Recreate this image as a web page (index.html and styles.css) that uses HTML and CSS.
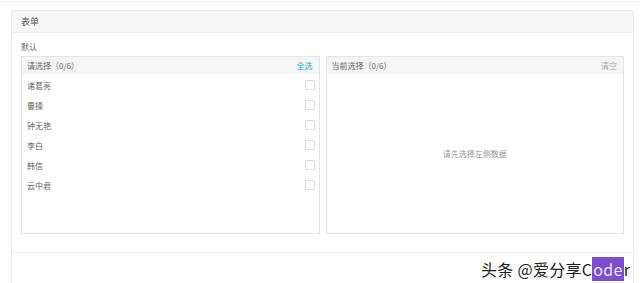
FILE: index.html
```html
<!DOCTYPE html>
<html lang="zh">
<head>
<meta charset="utf-8">
<link rel="stylesheet" href="styles.css">
</head>
<body>
<div class="page">
  <div class="card">
    <div class="card-head">表单</div>
    <div class="card-body">
      <div class="label">默认</div>
      <div class="transfer">
        <div class="panel">
          <div class="panel-head"><span>请选择（0/6）</span><span class="link">全选</span></div>
          <ul class="list">
            <li><span>诸葛亮</span><i class="cb"></i></li>
            <li><span>曹操</span><i class="cb"></i></li>
            <li><span>钟无艳</span><i class="cb"></i></li>
            <li><span>李白</span><i class="cb"></i></li>
            <li><span>韩信</span><i class="cb"></i></li>
            <li><span>云中君</span><i class="cb"></i></li>
          </ul>
        </div>
        <div class="panel">
          <div class="panel-head"><span>当前选择（0/6）</span><span class="muted">清空</span></div>
          <div class="empty">请先选择左侧数据</div>
        </div>
      </div>
    </div>
    <div class="card-foot"></div>
  </div>
  <div class="mark">头条 @爱分享C<span class="hl">ode</span>r</div>
</div>
</body>
</html>
```
FILE: styles.css
```css
* { box-sizing: border-box; }
html, body { margin: 0; padding: 0; background: #fff; }
body { font-family: "Noto Sans CJK SC", "Noto Sans", sans-serif; color: #666; }
.page {
  position: relative;
  height: 282px;
  overflow: hidden;
  padding: 8px 6px 0 11px;
  border-top: 1px solid #f2f2f2;
  margin-top: 1px;
}
.card {
  width: 623px;
  border: 1px solid #ececec;
  border-radius: 2px;
  background: #fff;
  height: 300px;
}
.card-head {
  height: 22px;
  line-height: 21px;
  background: #f7f7f7;
  border-bottom: 1px solid #eeeeee;
  padding-left: 9px;
  font-size: 9px;
  color: #555;
}
.card-body { padding: 8px 9px 18px 9px; }
.label { font-size: 8px; height: 12px; line-height: 12px; margin-bottom: 3px; color: #666; }
.transfer { display: flex; gap: 6px; }
.panel {
  flex: 1;
  height: 178px;
  border: 1px solid #e4e4e4;
  display: flex;
  flex-direction: column;
}
.panel-head {
  height: 17px;
  background: #f5f5f5;
  display: flex;
  justify-content: space-between;
  align-items: center;
  padding: 0 6px 0 5px;
  font-size: 8px;
  color: #666;
}
.link { color: #2ba6e0; }
.muted { color: #aaa; }
.list { list-style: none; margin: 0; padding: 1px 0 0 0; }
.list li {
  height: 20px;
  display: flex;
  align-items: center;
  justify-content: space-between;
  padding: 0 4px 0 5px;
  font-size: 8px;
  color: #666;
}
.cb {
  width: 10px; height: 10px;
  border: 1px solid #dcdcdc;
  border-radius: 1px;
  background: #fff;
}
.empty {
  flex: 1;
  display: flex;
  align-items: center;
  justify-content: center;
  font-size: 8px;
  color: #999;
}
.card-foot { border-top: 1px solid #f0f0f0; height: 40px; }
.mark {
  position: absolute;
  left: 481px;
  top: 256px;
  font-family: "Noto Sans CJK SC", sans-serif;
  font-size: 16px;
  letter-spacing: 0.3px;
  line-height: 23px;
  color: #222;
  white-space: nowrap;
}
.hl { background: #7c4fc8; color: #e8e0f5; padding: 0 1px; }
```
